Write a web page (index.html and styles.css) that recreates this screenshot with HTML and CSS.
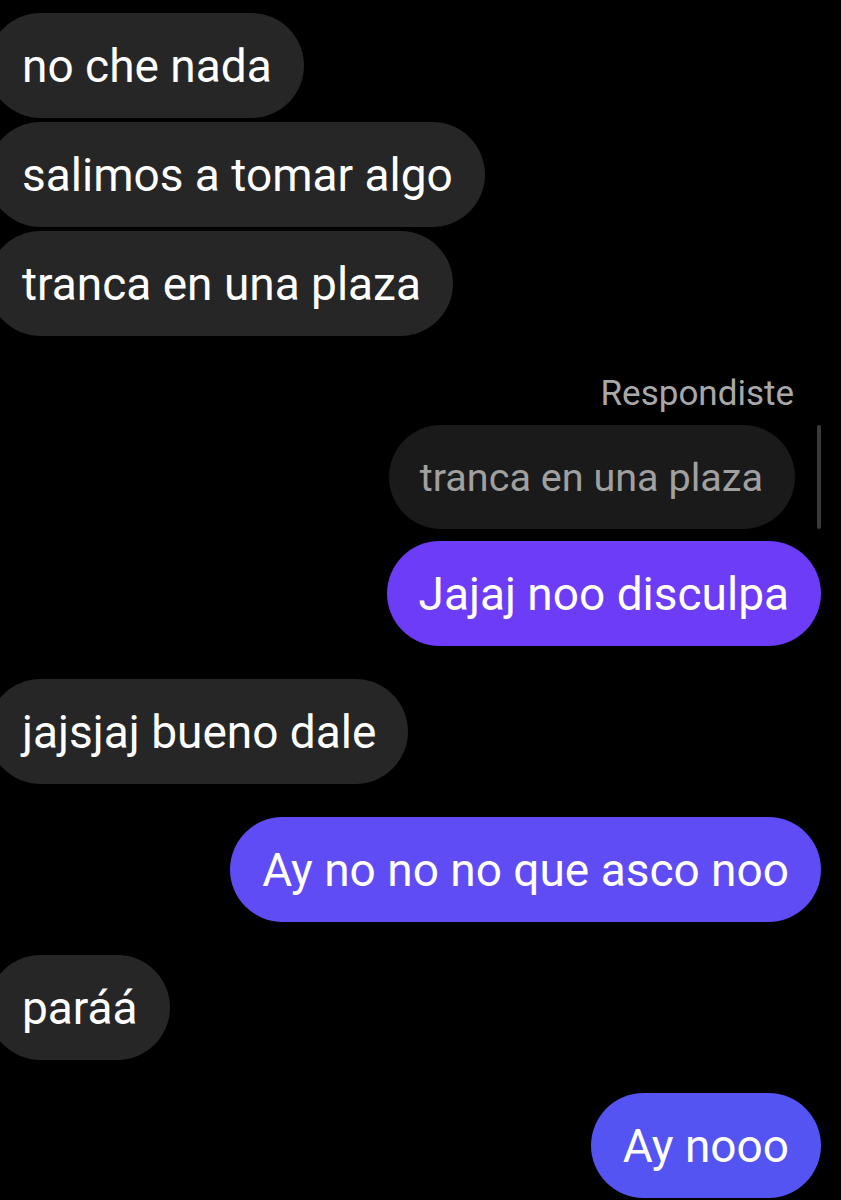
FILE: index.html
```html
<!DOCTYPE html>
<html lang="es">
<head>
<meta charset="utf-8">
<title>Chat</title>
<link rel="stylesheet" href="styles.css">
</head>
<body>
<div class="chat">
  <div class="group in first">
    <div class="bubble in-bubble">no che nada</div>
    <div class="bubble in-bubble">salimos a tomar algo</div>
    <div class="bubble in-bubble">tranca en una plaza</div>
  </div>
  <div class="group out reply-group">
    <div class="reply-label">Respondiste</div>
    <div class="quote-row">
      <div class="quote">tranca en una plaza</div>
      <div class="quote-bar"></div>
    </div>
    <div class="bubble out-bubble c1">Jajaj noo disculpa</div>
  </div>
  <div class="group in">
    <div class="bubble in-bubble">jajsjaj bueno dale</div>
  </div>
  <div class="group out">
    <div class="bubble out-bubble c2">Ay no no no que asco noo</div>
  </div>
  <div class="group in">
    <div class="bubble in-bubble">paráá</div>
  </div>
  <div class="group out">
    <div class="bubble out-bubble c3">Ay nooo</div>
  </div>
</div>
</body>
</html>
```
FILE: styles.css
```css
html, body {
  margin: 0;
  padding: 0;
  background: #000;
}
body {
  width: 841px;
  height: 1200px;
  overflow: hidden;
  font-family: Roboto, "Noto Sans", sans-serif;
}
.chat {
  display: flex;
  flex-direction: column;
  gap: 33px;
  padding-top: 13px;
}
.group {
  display: flex;
  flex-direction: column;
  gap: 4px;
}
.reply-group { margin-top: 8px; }
.group.in { align-items: flex-start; }
.group.out { align-items: flex-end; padding-right: 20px; }
.bubble {
  font-size: 46px;
  line-height: 45px;
  padding: 31px 32px 29px;
  border-radius: 53px;
  color: #fff;
  white-space: nowrap;
}
.in-bubble {
  background: #262626;
  margin-left: -12px;
  padding-left: 34px;
}
.out-bubble { padding-left: 32px; }
.c1 { background: #6d3cf7; }
.c2 { background: #5f4cf5; }
.c3 { background: #5454f3; }
.reply-label {
  font-size: 35px;
  line-height: 34px;
  color: #a8a8a8;
  margin-right: 27px;
  margin-bottom: 10px;
}
.quote-row {
  display: flex;
  align-items: stretch;
  gap: 22px;
  margin-bottom: 8px;
}
.quote {
  background: #1a1a1a;
  color: #a0a0a0;
  font-size: 39.6px;
  line-height: 44px;
  padding: 31px 32px 29px 31px;
  border-radius: 52px;
  white-space: nowrap;
}
.quote-bar {
  width: 4px;
  background: #3a3a3a;
  border-radius: 2px;
}
```
